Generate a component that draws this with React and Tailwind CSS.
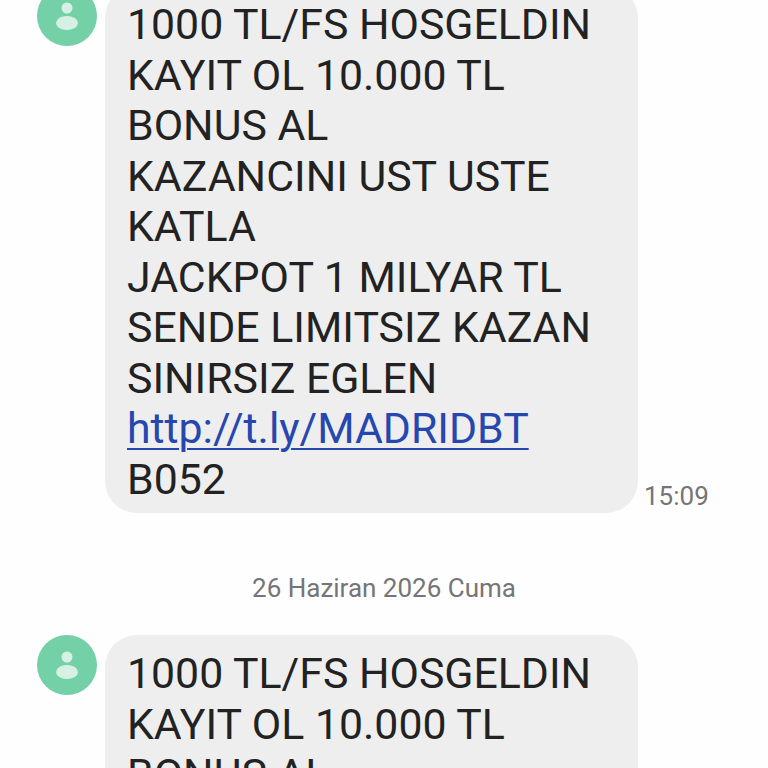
const LINES_TOP = [
  '1000 TL/FS HOSGELDIN',
  'KAYIT OL 10.000 TL',
  'BONUS AL',
  'KAZANCINI UST USTE',
  'KATLA',
  'JACKPOT 1 MILYAR TL',
  'SENDE LIMITSIZ KAZAN',
  'SINIRSIZ EGLEN',
];

const Avatar = () => (
  <div className="w-[60px] h-[60px] rounded-full bg-[#74d0a6] shrink-0 flex items-center justify-center">
    <svg width="60" height="60" viewBox="0 0 60 60" fill="#d6f1e4">
      <ellipse cx="30" cy="22" rx="5.5" ry="5.5" />
      <ellipse cx="30" cy="37" rx="11" ry="7" />
    </svg>
  </div>
);

const Message = ({ time }) => (
  <div className="flex items-start pl-[37px]">
    <Avatar />
    <div className="ml-[8px] w-[533px] shrink-0 rounded-[32px] bg-[#eeeeee] pl-[22px] pr-[10px] pt-[13px] pb-[9px] text-[42.8px] leading-[50.5px] text-[#222222] whitespace-nowrap">
      {LINES_TOP.map((line) => (
        <div key={line}>{line}</div>
      ))}
      <div className="text-[#2647ae] underline underline-offset-[5px] decoration-2">http://t.ly/MADRIDBT</div>
      <div>B052</div>
    </div>
    {time && (
      <span className="self-end ml-[6px] mb-[2px] text-[26px] leading-[30px] text-[#757575]">{time}</span>
    )}
  </div>
);

export default function App() {
  return (
    <div className="w-[768px] h-[768px] overflow-hidden bg-[#fefefe] font-['Roboto',sans-serif]">
      <div className="-mt-[14px]">
        <Message time="15:09" />
        <p className="mt-[60px] mb-[32px] text-center text-[26px] leading-[30px] text-[#757575]">26 Haziran 2026 Cuma</p>
        <Message />
      </div>
    </div>
  );
}
